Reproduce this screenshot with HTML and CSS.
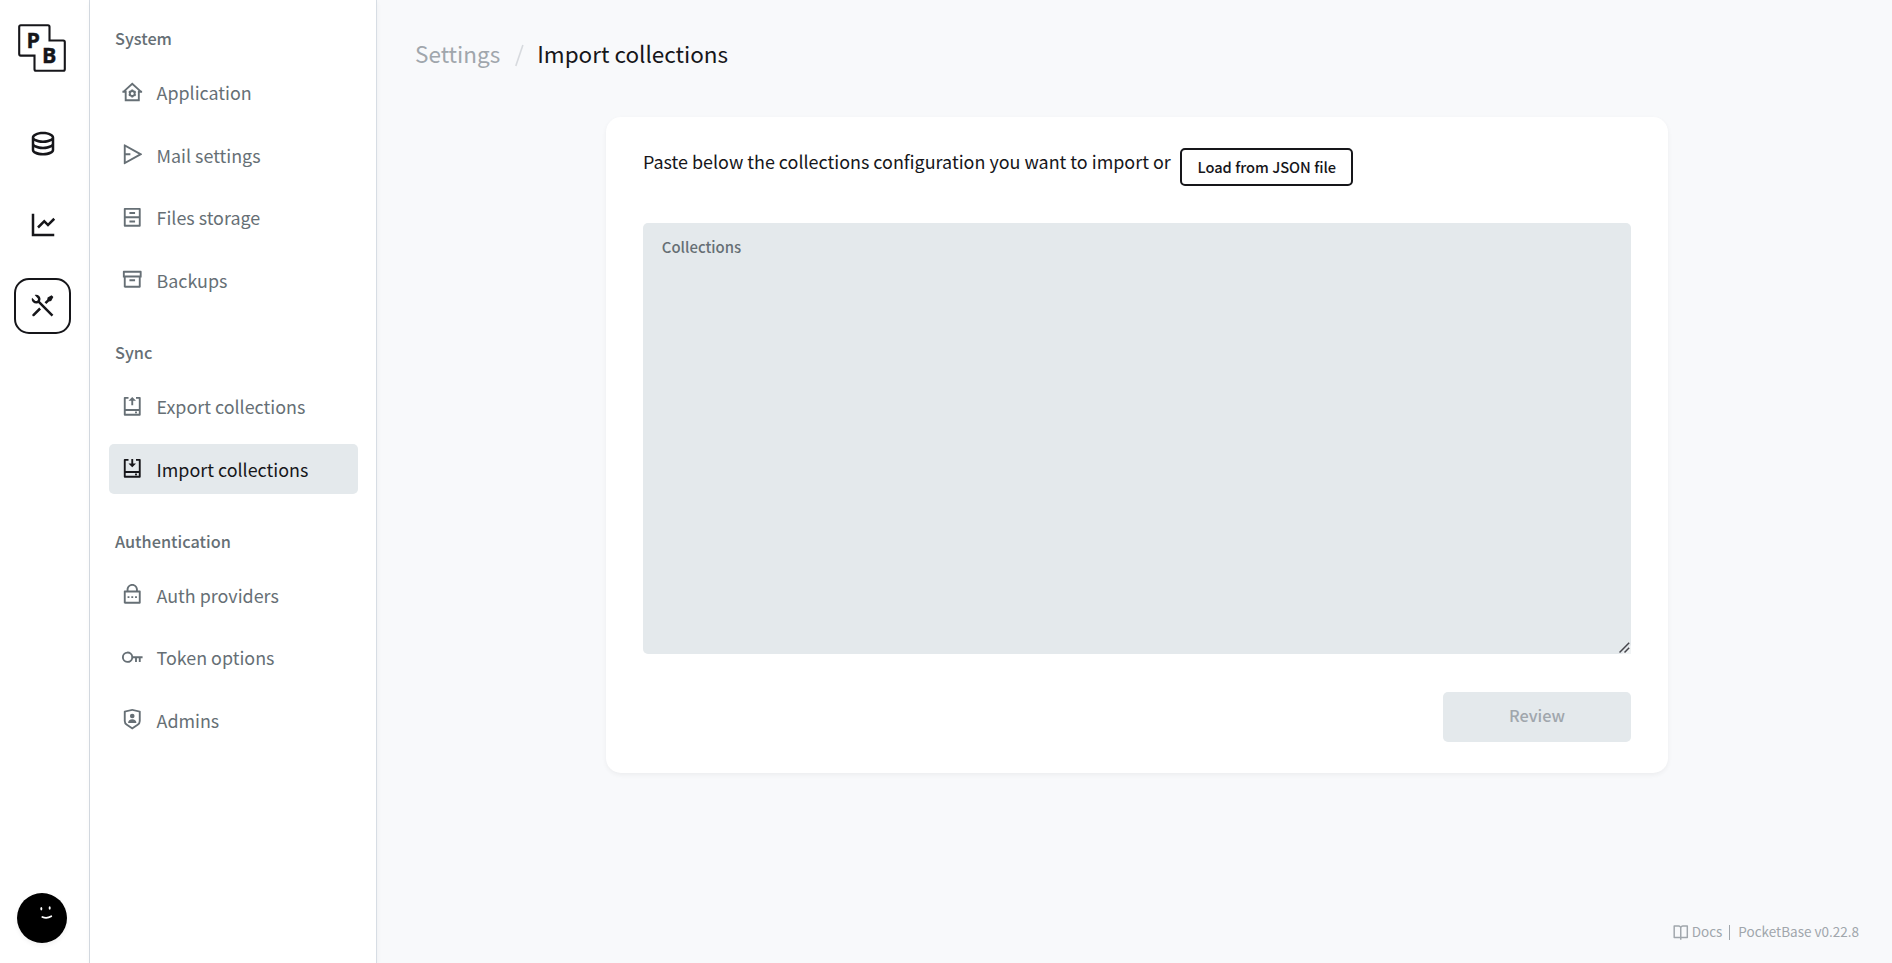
FILE: index.html
```html
<!DOCTYPE html>
<html lang="en">
<head>
<meta charset="utf-8">
<title>Import collections - PocketBase</title>
<link rel="stylesheet" href="styles.css">
</head>
<body>
<div class="app">
  <aside class="rail">
    <a class="logo">
      <svg width="50" height="50" viewBox="0 0 50 50">
        <path d="M3.7 2.2H31a1.5 1.5 0 0 1 1.500 1.500V17.500H46.300a1.500 1.500 0 0 1 1.500 1.500V46.300a1.500 1.500 0 0 1-1.500 1.500H19a1.500 1.500 0 0 1-1.500-1.500V32.600H3.700a1.500 1.500 0 0 1-1.500-1.500V3.700a1.500 1.500 0 0 1 1.500-1.500z" fill="#fff" stroke="#16161a" stroke-width="2.100"/>
        <text x="9.500" y="24.700" class="logo-letter">P</text>
        <text x="25" y="40.400" class="logo-letter">B</text>
      </svg>
    </a>
    <nav class="rail-nav">
      <a class="rail-item"><svg viewBox="0 0 24 24"><path d="M5 12.500C5 12.813 5.461 13.358 6.530 13.893C7.914 14.585 9.877 15 12 15C14.123 15 16.086 14.585 17.470 13.893C18.539 13.358 19 12.813 19 12.500V10.329C17.350 11.348 14.827 12 12 12C9.173 12 6.650 11.348 5 10.329V12.500ZM19 15.329C17.350 16.348 14.827 17 12 17C9.173 17 6.650 16.348 5 15.329V17.500C5 17.813 5.461 18.358 6.530 18.893C7.914 19.585 9.877 20 12 20C14.123 20 16.086 19.585 17.470 18.893C18.539 18.358 19 17.813 19 17.500V15.329ZM3 17.500V7.500C3 5.015 7.029 3 12 3C16.971 3 21 5.015 21 7.500V17.500C21 19.985 16.971 22 12 22C7.029 22 3 19.985 3 17.500ZM12 10C14.123 10 16.086 9.585 17.470 8.893C18.539 8.358 19 7.813 19 7.500C19 7.187 18.539 6.642 17.470 6.107C16.086 5.415 14.123 5 12 5C9.877 5 7.914 5.415 6.530 6.107C5.461 6.642 5 7.187 5 7.500C5 7.813 5.461 8.358 6.530 8.893C7.914 9.585 9.877 10 12 10Z"/></svg></a>
      <a class="rail-item"><svg viewBox="0 0 24 24"><path d="M5 3V19H21V21H3V3H5ZM20.293 6.293L21.707 7.707L16 13.414L13 10.415L8.707 14.707L7.293 13.293L13 7.586L16 10.585L20.293 6.293Z"/></svg></a>
      <a class="rail-item active"><svg viewBox="0 0 24 24"><path d="M5.329 3.272C6.563 2.833 7.992 3.107 8.979 4.094C10.100 5.215 10.302 6.907 9.584 8.234L20.293 18.944L18.879 20.358L8.170 9.649C6.843 10.367 5.151 10.165 4.030 9.044C3.042 8.057 2.768 6.627 3.207 5.393L5.444 7.630C6.030 8.216 6.979 8.216 7.565 7.630C8.151 7.044 8.151 6.094 7.565 5.509L5.329 3.272ZM15.697 5.155L18.879 3.387L20.293 4.802L18.525 7.984L16.757 8.337L14.636 10.458L13.222 9.044L15.343 6.923L15.697 5.155ZM8.979 13.287L10.394 14.701L5.090 20.004C4.700 20.395 4.066 20.395 3.676 20.004C3.313 19.642 3.287 19.070 3.598 18.677L3.676 18.590L8.979 13.287Z"/></svg></a>
    </nav>
    <div class="avatar">
      <svg width="50" height="50" viewBox="0 0 50 50">
        <g fill="#fff"><ellipse cx="24.300" cy="15.800" rx="1" ry="1.800"/><ellipse cx="32.700" cy="15" rx="1" ry="1.800"/></g>
        <path d="M25.300 24q4.600 2 9-.8" fill="none" stroke="#fff" stroke-width="1.700" stroke-linecap="round"/>
      </svg>
    </div>
  </aside>

  <aside class="sidebar">
    <section class="group">
      <h2 class="group-title">System</h2>
      <a class="item"><svg viewBox="0 0 24 24"><path class="line" d="M1.500 11.500H5V20.500H19V11.500H22.500M2.800 11.300L12 3L21.200 11.300"/><circle class="line" cx="12" cy="13.300" r="2.600"/><path class="line" stroke-width="1.500" d="M12 9v2M12 15.600v2M8.300 11.150l1.700 1M14 14.450l1.700 1M8.300 15.450l1.700-1M14 12.150l1.700-1"/></svg><span class="label">Application</span></a>
      <a class="item"><svg viewBox="0 0 24 24"><path d="M3.500 1.346C3.584 1.346 3.667 1.367 3.741 1.408L22.203 11.562C22.445 11.695 22.534 11.999 22.401 12.241C22.355 12.324 22.287 12.393 22.203 12.438L3.741 22.593C3.499 22.726 3.195 22.637 3.062 22.395C3.021 22.322 3 22.239 3 22.154V1.846C3 1.570 3.224 1.346 3.500 1.346ZM5 4.383V11H10V13H5V19.618L18.850 12L5 4.383Z"/></svg><span class="label">Mail settings</span></a>
      <a class="item"><svg viewBox="0 0 24 24"><path fill-rule="evenodd" d="M4 2H20a1 1 0 0 1 1 1V21a1 1 0 0 1-1 1H4a1 1 0 0 1-1-1V3a1 1 0 0 1 1-1zM5 4V11H19V4zM5 13V20H19V13zM9 6.500H15V8.500H9zM9 15.500H15V17.500H9z"/></svg><span class="label">Files storage</span></a>
      <a class="item"><svg viewBox="0 0 24 24"><path d="M3 10H2V4.003C2 3.449 2.455 3 2.992 3H21.008C21.556 3 22 3.438 22 4.003V10H21V20.002C21 20.553 20.555 21 20.007 21H3.993C3.445 21 3 20.553 3 20.002V10ZM19 10H5V19H19V10ZM4 5V8H20V5H4ZM9 12H15V14H9V12Z"/></svg><span class="label">Backups</span></a>
    </section>
    <section class="group">
      <h2 class="group-title">Sync</h2>
      <a class="item"><svg viewBox="0 0 24 24"><path fill-rule="evenodd" d="M8 2V4H5V15H19V4H16V2H20a1 1 0 0 1 1 1V21a1 1 0 0 1-1 1H4a1 1 0 0 1-1-1V3a1 1 0 0 1 1-1zM5 17V20H19V17zM15 17.500H17V19.500H15zM12 2L16 6H13V11H11V6H8z"/></svg><span class="label">Export collections</span></a>
      <a class="item active"><svg viewBox="0 0 24 24"><path fill-rule="evenodd" d="M8 2V4H5V15H19V4H16V2H20a1 1 0 0 1 1 1V21a1 1 0 0 1-1 1H4a1 1 0 0 1-1-1V3a1 1 0 0 1 1-1zM5 17V20H19V17zM15 17.500H17V19.500H15zM13 2V7H16L12 11L8 7H11V2z"/></svg><span class="label">Import collections</span></a>
    </section>
    <section class="group">
      <h2 class="group-title">Authentication</h2>
      <a class="item"><svg viewBox="0 0 24 24"><path d="M18 8H20C20.552 8 21 8.448 21 9V21C21 21.552 20.552 22 20 22H4C3.448 22 3 21.552 3 21V9C3 8.448 3.448 8 4 8H6V7C6 3.686 8.686 1 12 1C15.314 1 18 3.686 18 7V8ZM5 10V20H19V10H5ZM11 14H13V16H11V14ZM7 14H9V16H7V14ZM15 14H17V16H15V14ZM16 8V7C16 4.791 14.209 3 12 3C9.791 3 8 4.791 8 7V8H16Z"/></svg><span class="label">Auth providers</span></a>
      <a class="item"><svg viewBox="0 0 24 24"><path d="M12.917 13A6.002 6.002 0 0 1 1 12a6 6 0 0 1 11.917-1H23v2h-2v4h-2v-4h-2v4h-2v-4h-2.083zM7 16a4 4 0 1 0 0-8 4 4 0 0 0 0 8z"/></svg><span class="label">Token options</span></a>
      <a class="item"><svg viewBox="0 0 24 24"><path d="M3.783 2.826L12 1l8.217 1.826a1 1 0 0 1 .783.976v9.987a6 6 0 0 1-2.672 4.992L12 23l-6.328-4.219A6 6 0 0 1 3 13.790V3.802a1 1 0 0 1 .783-.976zM5 4.604v9.185a4 4 0 0 0 1.781 3.328L12 20.597l5.219-3.480A4 4 0 0 0 19 13.790V4.604L12 3.050 5 4.604zM12 11a2.500 2.500 0 1 1 0-5 2.500 2.500 0 0 1 0 5zm-4.473 5a4.500 4.500 0 0 1 8.946 0H7.527z"/></svg><span class="label">Admins</span></a>
    </section>
  </aside>

  <main class="page">
    <header class="breadcrumbs">
      <span class="crumb">Settings</span>
      <svg class="slash" width="9" height="23" viewBox="0 0 9 23"><path d="M.8 22L7.900 1"/></svg>
      <span class="crumb current">Import collections</span>
    </header>
    <div class="panel">
      <div class="intro">
        <p class="intro-text">Paste below the collections configuration you want to import or</p>
        <button class="btn-outline">Load from JSON file</button>
      </div>
      <div class="field">
        <label class="field-label">Collections</label>
        <svg class="grip" width="12" height="12" viewBox="0 0 12 12"><path d="M12 3V12H3z" fill="#f1f4f5"/><path d="M.5 10.500L10.200.8M5.500 10.500L10.200 5.800" stroke="#45454b" stroke-width="1.500" fill="none"/></svg>
      </div>
      <div class="actions"><button class="btn-review">Review</button></div>
    </div>
    <footer class="footer">
      <a class="docs"><svg viewBox="0 0 24 24"><path d="M13 21v2h-2v-2H3a1 1 0 0 1-1-1V4a1 1 0 0 1 1-1h6a3.990 3.990 0 0 1 3 1.354A3.990 3.990 0 0 1 15 3h6a1 1 0 0 1 1 1v16a1 1 0 0 1-1 1h-8zm7-2V5h-5a2 2 0 0 0-2 2v12h7zm-9 0V7a2 2 0 0 0-2-2H4v14h7z"/></svg><span>Docs</span></a>
      <span class="divider"></span>
      <span>PocketBase v0.22.8</span>
    </footer>
  </main>
</div>
</body>
</html>
```
FILE: styles.css
```css
* { box-sizing: border-box; }
body {
  margin: 0;
  font-family: "Noto Sans CJK SC", "Open Sans", sans-serif;
  color: #16161a;
  background: #f8f9fb;
}
svg { display: block; fill: currentColor; flex: none; }
.app { display: flex; height: 963px; overflow: hidden; }

.rail {
  width: 90px;
  padding: 23px 19px 20px 14px;
  display: flex;
  flex-direction: column;
  align-items: center;
  background: #fff;
  border-right: 1px solid #d7dde4;
}
.logo { height: 50px; }
.logo-letter { font: bold 21.4px "Open Sans", sans-serif; stroke: #16161a; stroke-width: .4; }
.rail-nav { margin-top: 43px; display: flex; flex-direction: column; gap: 25px; }
.rail-item {
  width: 57px;
  height: 56px;
  display: flex;
  align-items: center;
  justify-content: center;
  border: 2px solid transparent;
  border-radius: 15px;
}
.rail-item:first-child { margin: -1px 0 1px; }
.rail-item.active { border-color: #16161a; }
.rail-item svg { width: 30px; height: 30px; margin-left: 1px; }
.avatar {
  margin-top: auto;
  width: 50px;
  height: 50px;
  border-radius: 50%;
  background: #000;
  box-shadow: 0 2px 5px rgba(0, 0, 0, .06);
}

.sidebar {
  width: 287px;
  padding: 23px 18px 0 19px;
  background: #fff;
  border-right: 1px solid #d7dde4;
  box-shadow: 0 2px 5px rgba(0, 0, 0, .05);
}
.group { display: flex; flex-direction: column; gap: 12.5px; margin-bottom: 32.5px; }
.group:nth-child(2) { margin-bottom: 32px; }
.group-title {
  margin: 0 0 1.5px;
  padding-left: 6px;
  font-size: 16.3px;
  font-weight: 500;
  line-height: 30px;
  color: #666f75;
}
.item {
  height: 50px;
  display: flex;
  align-items: center;
  gap: 13px;
  padding-left: 12px;
  border-radius: 5px;
  color: #666f75;
  font-size: 17.9px;
  line-height: 26px;
}
.item svg { width: 22.5px; height: 22.5px; }
.item .label { padding-top: .5px; }
.item.active { background: #e4e9ec; color: #16161a; }
.line { fill: none; stroke: currentColor; stroke-width: 2; }

.page { flex: 1; display: flex; flex-direction: column; }
.breadcrumbs {
  height: 117px;
  padding: 38px 0 0 38px;
  display: flex;
  align-items: flex-start;
  font-size: 22.5px;
  line-height: 31px;
}
.crumb { color: #a0a6ac; }
.crumb.current { color: #16161a; }
.slash { margin: 6px 13.5px 0 14.5px; fill: none; stroke: #d7dade; stroke-width: 1.6; }

.panel {
  width: 1062px;
  height: 656px;
  padding: 31px 37px;
  margin-left: 229px;
  border-radius: 15px;
  background: #fff;
  box-shadow: 0 2px 5px rgba(0, 0, 0, .05);
}
.intro { display: flex; align-items: flex-start; gap: 9.5px; height: 38px; }
.intro-text { margin: 0; font-size: 17.93px; line-height: 26.4px; }
.btn-outline {
  width: 173px;
  height: 38px;
  padding: 0;
  border: 2px solid #16161a;
  border-radius: 5px;
  background: none;
  color: #16161a;
  font: 500 14.65px/20px "Noto Sans CJK SC", "Open Sans", sans-serif;
}
.field {
  position: relative;
  margin-top: 37px;
  height: 431px;
  padding: 12.5px 18.8px;
  border-radius: 5px;
  background: #e4e9ec;
}
.field-label { display: block; font-size: 14.9px; font-weight: 500; line-height: 22px; color: #666f75; }
.grip { position: absolute; right: 0; bottom: 0; }
.actions { display: flex; justify-content: flex-end; margin-top: 38px; }
.btn-review {
  width: 188px;
  height: 50px;
  padding: 0 0 4px;
  border: 0;
  border-radius: 5px;
  background: #e4e9ec;
  color: #a0a6ac;
  font: 500 16.3px/24px "Noto Sans CJK SC", "Open Sans", sans-serif;
}

.footer {
  margin-top: auto;
  padding: 0 33px 22px 0;
  display: flex;
  justify-content: flex-end;
  align-items: center;
  font-size: 13.5px;
  line-height: 20px;
  color: #a0a6ac;
}
.docs { display: flex; align-items: center; gap: 2px; }
.docs svg { width: 17.5px; height: 17.5px; margin-top: 2px; }
.divider { width: 1px; height: 15px; margin: 3px 8px 0 7px; background: #a0a6ac; }
```
